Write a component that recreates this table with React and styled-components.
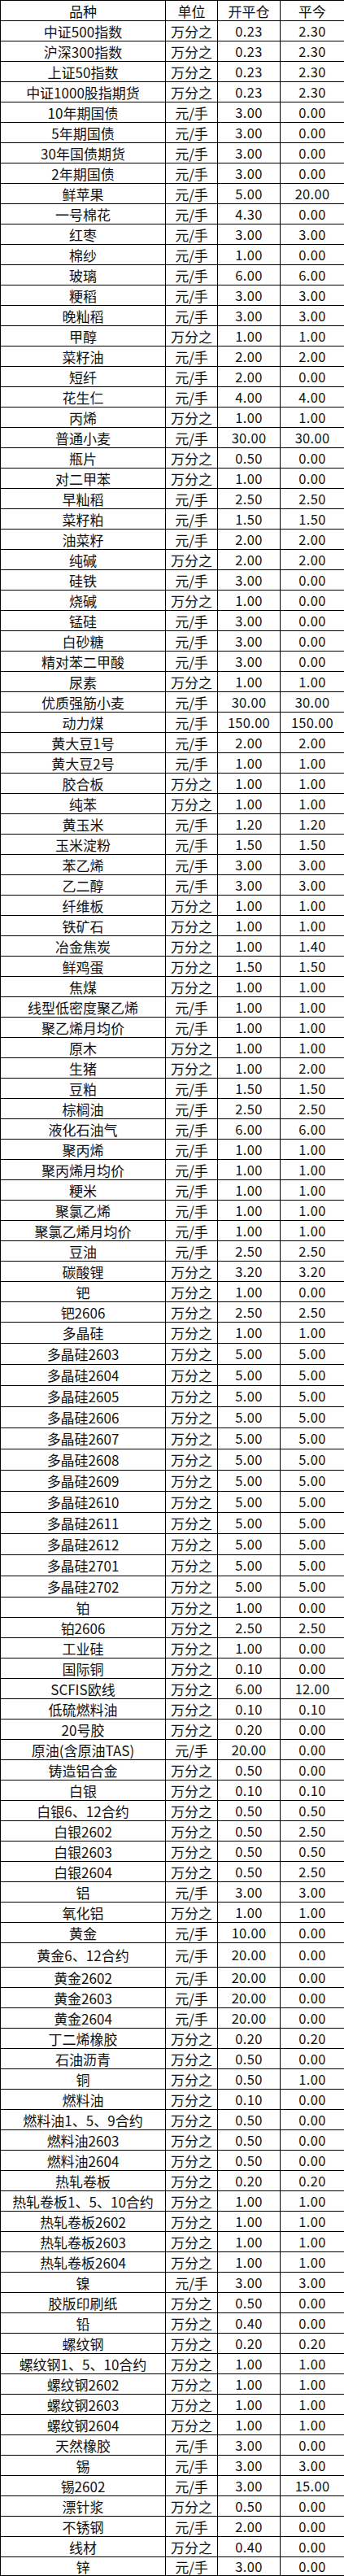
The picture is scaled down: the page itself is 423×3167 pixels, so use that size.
import React from "react";
import styled, { createGlobalStyle } from "styled-components";

const GlobalStyle = createGlobalStyle`
  html, body {
    margin: 0;
    padding: 0;
    background: #ffffff;
  }
  body {
    font-family: "Noto Sans CJK SC", "Noto Sans", sans-serif;
  }
`;

const W = "万分之";
const Y = "元/手";

const rows = [
  ["中证500指数", W, "0.23", "2.30"],
  ["沪深300指数", W, "0.23", "2.30"],
  ["上证50指数", W, "0.23", "2.30"],
  ["中证1000股指期货", W, "0.23", "2.30"],
  ["10年期国债", Y, "3.00", "0.00"],
  ["5年期国债", Y, "3.00", "0.00"],
  ["30年国债期货", Y, "3.00", "0.00"],
  ["2年期国债", Y, "3.00", "0.00"],
  ["鲜苹果", Y, "5.00", "20.00"],
  ["一号棉花", Y, "4.30", "0.00"],
  ["红枣", Y, "3.00", "3.00"],
  ["棉纱", Y, "1.00", "0.00"],
  ["玻璃", Y, "6.00", "6.00"],
  ["粳稻", Y, "3.00", "3.00"],
  ["晚籼稻", Y, "3.00", "3.00"],
  ["甲醇", W, "1.00", "1.00"],
  ["菜籽油", Y, "2.00", "2.00"],
  ["短纤", Y, "2.00", "0.00"],
  ["花生仁", Y, "4.00", "4.00"],
  ["丙烯", W, "1.00", "1.00"],
  ["普通小麦", Y, "30.00", "30.00"],
  ["瓶片", W, "0.50", "0.00"],
  ["对二甲苯", W, "1.00", "0.00"],
  ["早籼稻", Y, "2.50", "2.50"],
  ["菜籽粕", Y, "1.50", "1.50"],
  ["油菜籽", Y, "2.00", "2.00"],
  ["纯碱", W, "2.00", "2.00"],
  ["硅铁", Y, "3.00", "0.00"],
  ["烧碱", W, "1.00", "0.00"],
  ["锰硅", Y, "3.00", "0.00"],
  ["白砂糖", Y, "3.00", "0.00"],
  ["精对苯二甲酸", Y, "3.00", "0.00"],
  ["尿素", W, "1.00", "1.00"],
  ["优质强筋小麦", Y, "30.00", "30.00"],
  ["动力煤", Y, "150.00", "150.00"],
  ["黄大豆1号", Y, "2.00", "2.00"],
  ["黄大豆2号", Y, "1.00", "1.00"],
  ["胶合板", W, "1.00", "1.00"],
  ["纯苯", W, "1.00", "1.00"],
  ["黄玉米", Y, "1.20", "1.20"],
  ["玉米淀粉", Y, "1.50", "1.50"],
  ["苯乙烯", Y, "3.00", "3.00"],
  ["乙二醇", Y, "3.00", "3.00"],
  ["纤维板", W, "1.00", "1.00"],
  ["铁矿石", W, "1.00", "1.00"],
  ["冶金焦炭", W, "1.00", "1.40"],
  ["鲜鸡蛋", W, "1.50", "1.50"],
  ["焦煤", W, "1.00", "1.00"],
  ["线型低密度聚乙烯", Y, "1.00", "1.00"],
  ["聚乙烯月均价", Y, "1.00", "1.00"],
  ["原木", W, "1.00", "1.00"],
  ["生猪", W, "1.00", "2.00"],
  ["豆粕", Y, "1.50", "1.50"],
  ["棕榈油", Y, "2.50", "2.50"],
  ["液化石油气", Y, "6.00", "6.00"],
  ["聚丙烯", Y, "1.00", "1.00"],
  ["聚丙烯月均价", Y, "1.00", "1.00"],
  ["粳米", Y, "1.00", "1.00"],
  ["聚氯乙烯", Y, "1.00", "1.00"],
  ["聚氯乙烯月均价", Y, "1.00", "1.00"],
  ["豆油", Y, "2.50", "2.50"],
  ["碳酸锂", W, "3.20", "3.20"],
  ["钯", W, "1.00", "0.00"],
  ["钯2606", W, "2.50", "2.50"],
  ["多晶硅", W, "1.00", "1.00", 26],
  ["多晶硅2603", W, "5.00", "5.00", 26],
  ["多晶硅2604", W, "5.00", "5.00", 26],
  ["多晶硅2605", W, "5.00", "5.00", 26],
  ["多晶硅2606", W, "5.00", "5.00", 26],
  ["多晶硅2607", W, "5.00", "5.00", 26],
  ["多晶硅2608", W, "5.00", "5.00", 26],
  ["多晶硅2609", W, "5.00", "5.00", 26],
  ["多晶硅2610", W, "5.00", "5.00", 26],
  ["多晶硅2611", W, "5.00", "5.00", 26],
  ["多晶硅2612", W, "5.00", "5.00", 26],
  ["多晶硅2701", W, "5.00", "5.00", 26],
  ["多晶硅2702", W, "5.00", "5.00", 26],
  ["铂", W, "1.00", "0.00"],
  ["铂2606", W, "2.50", "2.50"],
  ["工业硅", W, "1.00", "0.00"],
  ["国际铜", W, "0.10", "0.00"],
  ["SCFIS欧线", W, "6.00", "12.00"],
  ["低硫燃料油", W, "0.10", "0.10"],
  ["20号胶", W, "0.20", "0.00"],
  ["原油(含原油TAS)", Y, "20.00", "0.00"],
  ["铸造铝合金", W, "0.50", "0.00"],
  ["白银", W, "0.10", "0.10"],
  ["白银6、12合约", W, "0.50", "0.50"],
  ["白银2602", W, "0.50", "2.50"],
  ["白银2603", W, "0.50", "0.50"],
  ["白银2604", W, "0.50", "2.50"],
  ["铝", Y, "3.00", "3.00"],
  ["氧化铝", W, "1.00", "1.00"],
  ["黄金", Y, "10.00", "0.00"],
  ["黄金6、12合约", Y, "20.00", "0.00", 30],
  ["黄金2602", Y, "20.00", "0.00"],
  ["黄金2603", Y, "20.00", "0.00"],
  ["黄金2604", Y, "20.00", "0.00"],
  ["丁二烯橡胶", W, "0.20", "0.20"],
  ["石油沥青", W, "0.50", "0.00"],
  ["铜", W, "0.50", "1.00"],
  ["燃料油", W, "0.10", "0.00"],
  ["燃料油1、5、9合约", W, "0.50", "0.00"],
  ["燃料油2603", W, "0.50", "0.00"],
  ["燃料油2604", W, "0.50", "0.00"],
  ["热轧卷板", W, "0.20", "0.20"],
  ["热轧卷板1、5、10合约", W, "1.00", "1.00"],
  ["热轧卷板2602", W, "1.00", "1.00"],
  ["热轧卷板2603", W, "1.00", "1.00"],
  ["热轧卷板2604", W, "1.00", "1.00"],
  ["镍", Y, "3.00", "3.00"],
  ["胶版印刷纸", W, "0.50", "0.00"],
  ["铅", W, "0.40", "0.00"],
  ["螺纹钢", W, "0.20", "0.20"],
  ["螺纹钢1、5、10合约", W, "1.00", "1.00"],
  ["螺纹钢2602", W, "1.00", "1.00"],
  ["螺纹钢2603", W, "1.00", "1.00"],
  ["螺纹钢2604", W, "1.00", "1.00"],
  ["天然橡胶", Y, "3.00", "0.00"],
  ["锡", Y, "3.00", "3.00"],
  ["锡2602", Y, "3.00", "15.00"],
  ["漂针浆", W, "0.50", "0.00"],
  ["不锈钢", Y, "2.00", "0.00"],
  ["线材", W, "0.40", "0.00"],
  ["锌", Y, "3.00", "0.00", 23],
];

const Table = styled.table`
  width: 423px;
  table-layout: fixed;
  border-collapse: collapse;
  border-spacing: 0;
  color: #000;
  background: #fff;
`;

const Row = styled.tr`
  height: ${(p) => p.$h}px;
`;

const Cell = styled.td`
  border: 1px solid #000;
  padding: 0;
  text-align: center;
  vertical-align: middle;
  white-space: nowrap;
  overflow: hidden;
  font-size: 17px;
  line-height: 1;
  color: #111;
  font-family: "Noto Sans CJK SC", "Noto Sans", sans-serif;
`;

const NumCell = styled(Cell)`
  font-size: 16.5px;
  letter-spacing: 0.3px;
`;

export default function App() {
  return (
    <>
      <GlobalStyle />
      <Table>
        <colgroup>
          <col style={{ width: 203 }} />
          <col style={{ width: 64 }} />
          <col style={{ width: 77 }} />
          <col style={{ width: 79 }} />
        </colgroup>
        <tbody>
          <Row $h={25}>
            <Cell>品种</Cell>
            <Cell>单位</Cell>
            <Cell>开平仓</Cell>
            <Cell>平今</Cell>
          </Row>
          {rows.map(([name, unit, open, today, h]) => (
            <Row key={name} $h={h || 25}>
              <Cell>{name}</Cell>
              <Cell>{unit}</Cell>
              <NumCell>{open}</NumCell>
              <NumCell>{today}</NumCell>
            </Row>
          ))}
        </tbody>
      </Table>
    </>
  );
}
